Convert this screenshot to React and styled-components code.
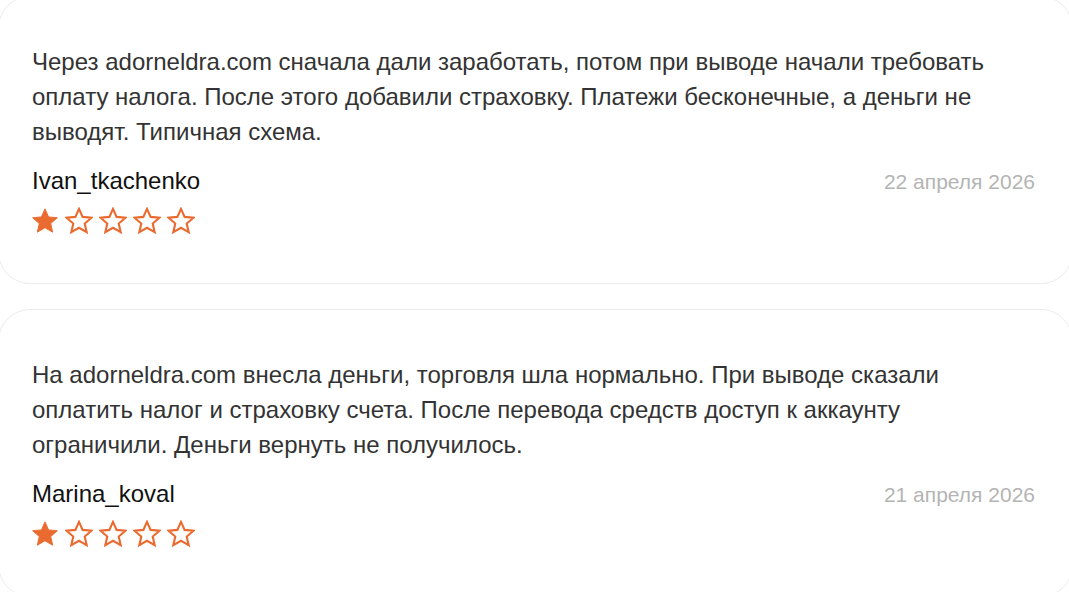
import React from "react";
import styled, { createGlobalStyle } from "styled-components";

const Global = createGlobalStyle`
  html, body { margin: 0; padding: 0; background: #fff; }
  body { font-family: "Liberation Sans", Arial, sans-serif; overflow: hidden; }
`;

const List = styled.div`
  display: flex;
  flex-direction: column;
  gap: 25px;
  margin: -4px -4px 0 -2px;
`;

const Card = styled.article`
  box-sizing: border-box;
  height: 288px;
  border: 1px solid #ececec;
  border-radius: 32px;
  padding: 47px 37px 0 33px;
  display: flex;
  flex-direction: column;
  background: #fff;
`;

const Text = styled.p`
  margin: 0;
  font-size: 24px;
  line-height: 35px;
  color: #333;
`;

const Meta = styled.div`
  display: flex;
  justify-content: space-between;
  align-items: baseline;
  margin-top: 18px;
`;

const Author = styled.span`
  font-size: 24px;
  color: #111;
  line-height: 28px;
`;

const DateText = styled.span`
  font-size: 21px;
  color: #b4b4b4;
  line-height: 28px;
`;

const Stars = styled.div`
  display: flex;
  gap: 6px;
  margin-top: 11px;
  margin-left: -1px;
`;

const StarIcon = styled.svg`
  display: block;
  width: 28px;
  height: 28px;
`;

const Star = ({ filled }) => (
  <StarIcon viewBox="0 0 24 24">
    <path
      d="M12 1.6l3.1 6.9 7.5.7-5.7 5 1.7 7.4L12 17.8l-6.6 3.8 1.7-7.4-5.7-5 7.5-.7z"
      fill={filled ? "#ea6b30" : "#fff"}
      stroke="#ea6b30"
      strokeWidth={filled ? 0.8 : 1.8}
      strokeLinejoin="miter"
    />
  </StarIcon>
);

const reviews = [
  {
    text: "Через adorneldra.com сначала дали заработать, потом при выводе начали требовать оплату налога. После этого добавили страховку. Платежи бесконечные, а деньги не выводят. Типичная схема.",
    author: "Ivan_tkachenko",
    date: "22 апреля 2026",
    rating: 1,
  },
  {
    text: "На adorneldra.com внесла деньги, торговля шла нормально. При выводе сказали оплатить налог и страховку счета. После перевода средств доступ к аккаунту ограничили. Деньги вернуть не получилось.",
    author: "Marina_koval",
    date: "21 апреля 2026",
    rating: 1,
  },
];

export default function App() {
  return (
    <>
      <Global />
      <List>
        {reviews.map((r) => (
          <Card key={r.author}>
            <Text>{r.text}</Text>
            <Meta>
              <Author>{r.author}</Author>
              <DateText>{r.date}</DateText>
            </Meta>
            <Stars>
              {[0, 1, 2, 3, 4].map((i) => (
                <Star key={i} filled={i < r.rating} />
              ))}
            </Stars>
          </Card>
        ))}
      </List>
    </>
  );
}
